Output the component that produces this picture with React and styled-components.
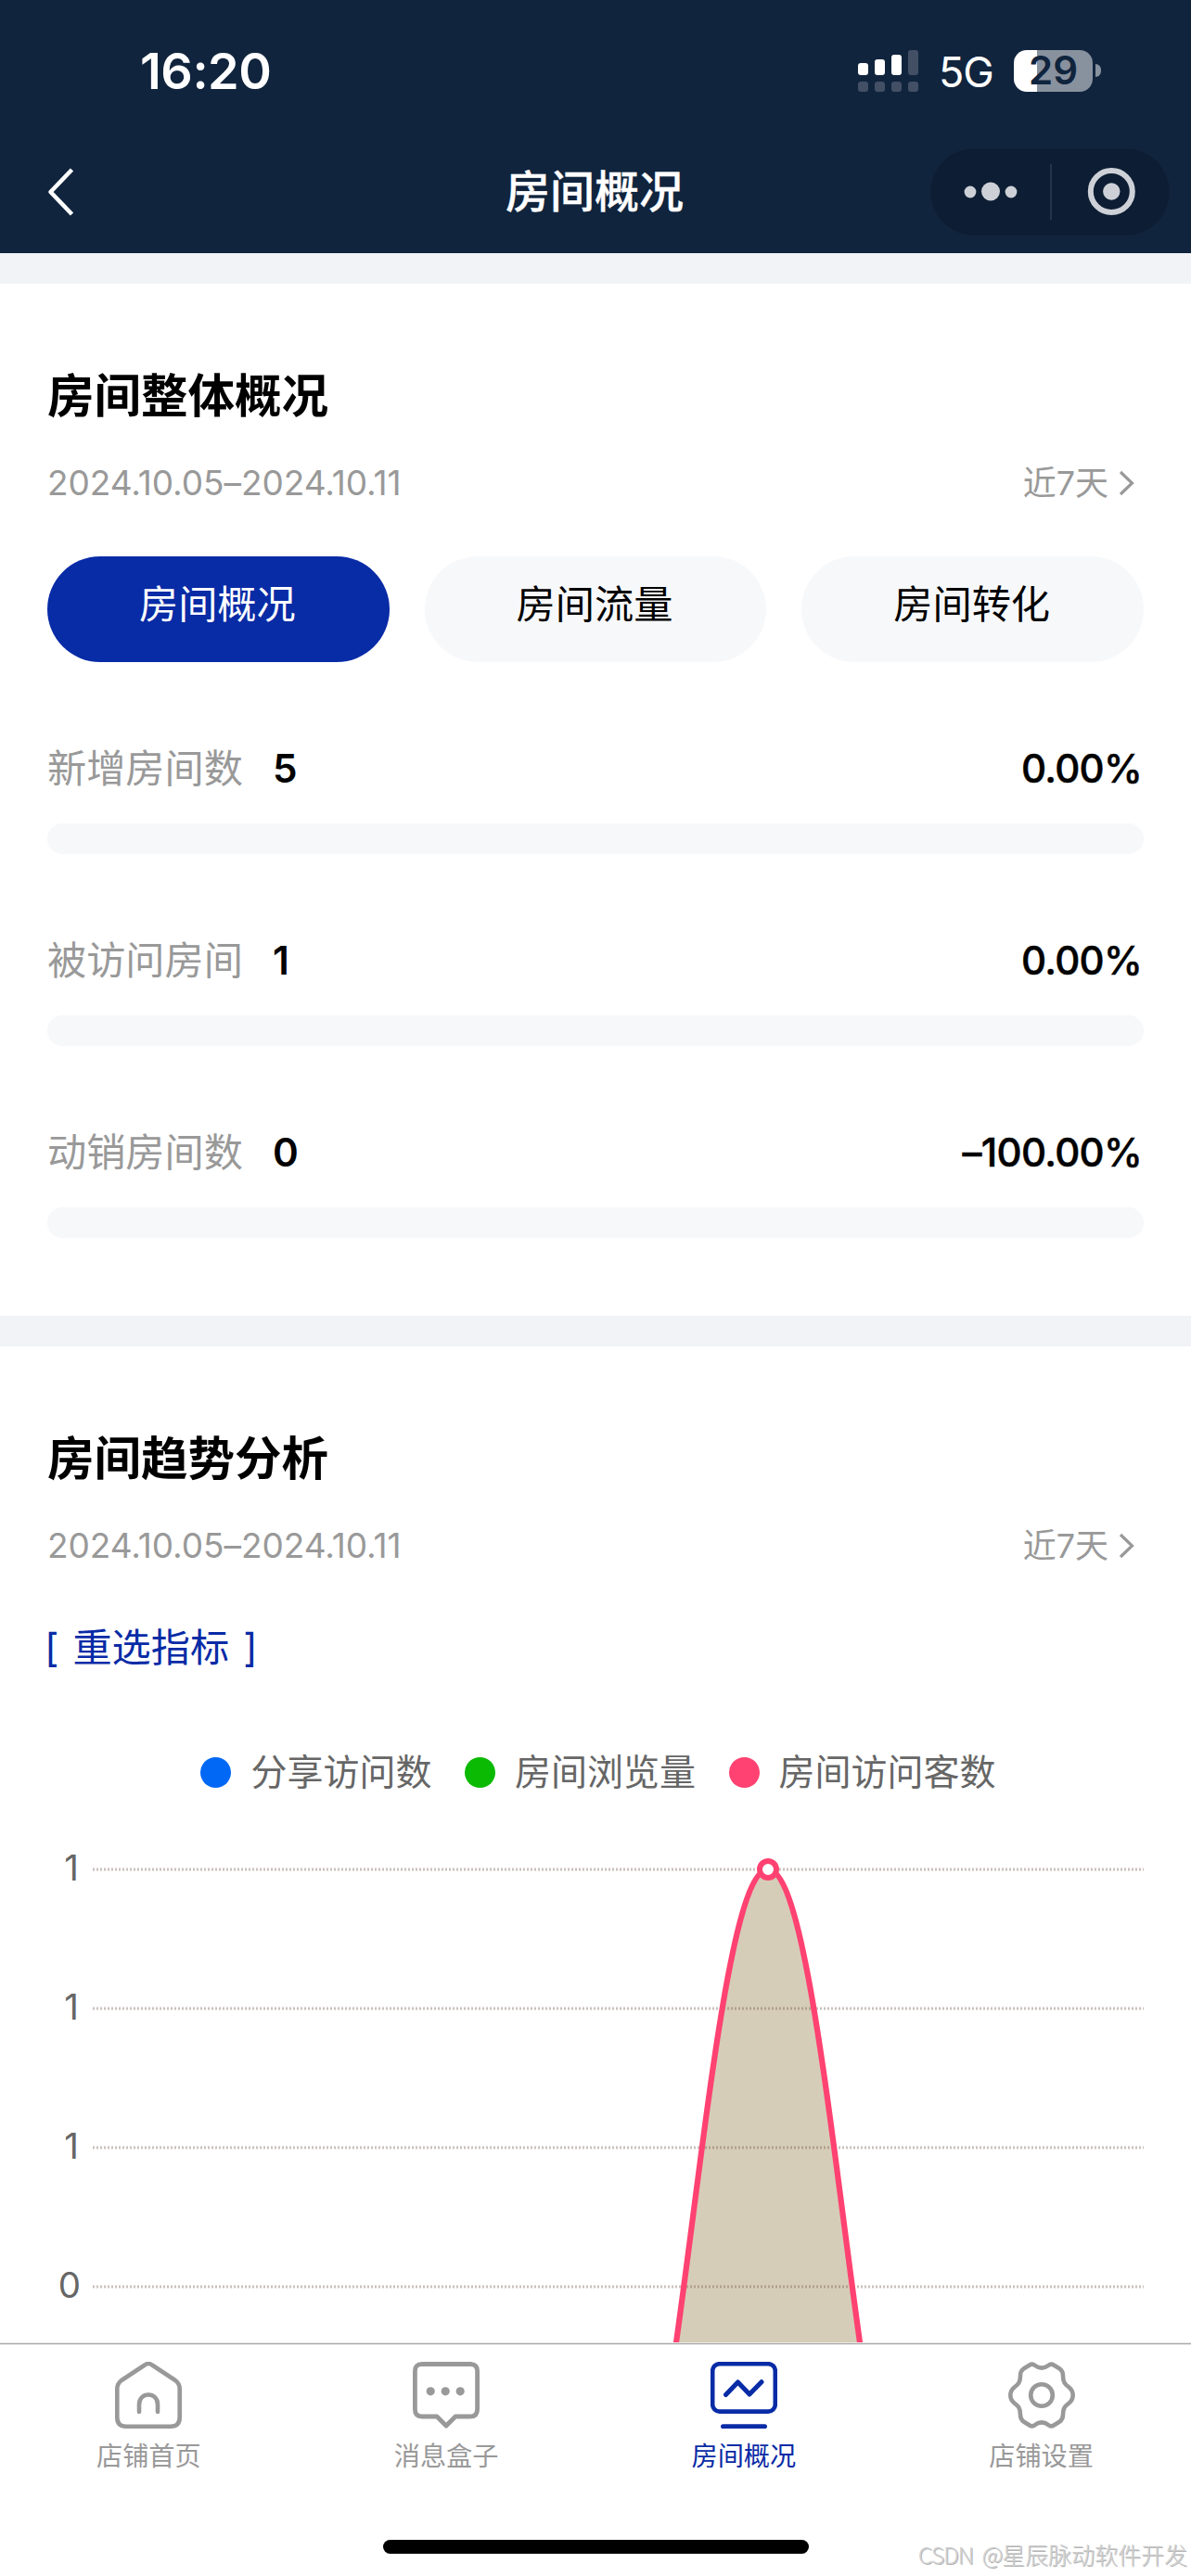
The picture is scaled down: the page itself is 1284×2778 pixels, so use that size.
import styled, { createGlobalStyle } from "styled-components";
import React from 'react';

const GlobalStyle = createGlobalStyle`
  * {
    box-sizing: border-box;
  }
  body {
    margin: 0;
    background: #fff;
    font-family: Inter, 'Noto Sans CJK SC', sans-serif;
  }
`;

const Page = styled.div`
  position: relative;
  display: flex;
  flex-direction: column;
  width: 1284px;
  height: 2778px;
  overflow: hidden;
  background: #f1f3f7;
`;

const Header = styled.header`
  flex: none;
  height: 273px;
  background: #10243d;
  color: #fff;
`;

const StatusBar = styled.div`
  display: flex;
  align-items: center;
  justify-content: space-between;
  height: 152px;
  padding: 0 97px 0 151px;
`;

const Clock = styled.div`
  padding-top: 2px;
  font-size: 54px;
  font-weight: 600;
  line-height: 64px;
  letter-spacing: -0.5px;
`;

const StatusIcons = styled.div`
  display: flex;
  align-items: center;
`;

const Network = styled.span`
  width: 103px;
  padding: 4px 0 0 22px;
  font-size: 45px;
  line-height: 48px;
  letter-spacing: -1px;
`;

const Battery = styled.div`
  width: 85px;
  height: 45px;
  border-radius: 14px;
  background: linear-gradient(to right, #fff ${props => props.$level}%, #88919e ${props => props.$level}%);
  color: #10243d;
  font-size: 42px;
  font-weight: 600;
  line-height: 44px;
  text-align: center;
`;

const BatteryTip = styled.div`
  width: 6px;
  height: 14px;
  margin-left: 3px;
  border-radius: 0 6px 6px 0;
  background: #88919e;
`;

const NavBar = styled.div`
  display: grid;
  grid-template-columns: 300px 1fr 300px;
  align-items: center;
  height: 110px;
  padding: 0 22px;
`;

const BackIcon = styled.svg`
  margin-left: 28px;
`;

const NavTitle = styled.h1`
  margin: 0;
  padding-right: 2px;
  font-size: 48px;
  font-weight: 500;
  line-height: 60px;
  text-align: center;
  -webkit-text-stroke: 0.4px #fff;
`;

const Capsule = styled.div`
  display: flex;
  align-items: center;
  justify-self: end;
  width: 260px;
  height: 96px;
  border: 1px solid #15263e;
  border-radius: 48px;
  background: #0d1d33;
`;

const Content = styled.main`
  display: flex;
  flex: 1;
  flex-direction: column;
  gap: 33px;
  padding-top: 33px;
  overflow: hidden;
`;

const Section = styled.section`
  flex: none;
  padding: 91px 51px ${props => props.$bottom || 0}px;
  background: #fff;
`;

const SectionTitle = styled.h2`
  margin: 0;
  font-size: 50.5px;
  font-weight: 600;
  line-height: 60px;
  color: #000;
`;

const DateRow = styled.div`
  display: flex;
  align-items: center;
  justify-content: space-between;
  margin-top: 39px;
  padding-right: 9px;
  font-size: 37px;
  line-height: 50px;
  color: #999;
`;

const DateRange = styled.span`
  letter-spacing: -0.05px;
`;

const RangePicker = styled.span`
  display: flex;
  align-items: center;
  gap: 11px;
  font-size: 36px;
`;

const Tabs = styled.div`
  display: grid;
  grid-template-columns: repeat(3, 1fr);
  gap: 38px;
  margin-top: 54px;
`;

const Tab = styled.button`
  height: 114px;
  padding: 0 2px 18px 0;
  border: 0;
  border-radius: 57px;
  background: ${props => (props.$active ? '#082ba6' : '#f7f8fa')};
  color: ${props => (props.$active ? '#fff' : '#000')};
  font-family: inherit;
  font-size: 42.2px;
`;

const StatHead = styled.div`
  display: flex;
  justify-content: space-between;
  margin-top: 90px;
  padding-right: 2px;
  font-size: 42.2px;
  line-height: 50px;
  color: #999;
`;

const StatValue = styled.b`
  margin-left: ${props => props.$gap || 0}px;
  font-weight: 600;
  color: #000;
`;

const StatRate = styled(StatValue)`
  font-size: 42px;
  font-weight: 500;
  letter-spacing: -0.7px;
  -webkit-text-stroke: 0.5px #000;
`;

const StatTrack = styled.div`
  height: 33px;
  margin-top: 34px;
  border-radius: 16px;
  background: #f7f8fa;
`;

const PickMetrics = styled.div`
  display: flex;
  align-items: center;
  gap: 15px;
  margin: 60px 0 0 -3px;
  font-size: 42.2px;
  line-height: 50px;
  color: #082ba6;
`;

const Bracket = styled.span`
  font-weight: 400;
`;

const Legend = styled.div`
  display: flex;
  justify-content: center;
  gap: 35.5px;
  margin-top: 84px;
  padding-left: 6px;
  font-size: 39px;
  line-height: 50px;
  color: #666;
`;

const LegendItem = styled.div`
  display: flex;
  align-items: center;
  gap: 21px;
  &::before {
    content: '';
    width: 33px;
    height: 33px;
    border-radius: 50%;
    background: ${props => props.$color};
  }
`;

const ChartSvg = styled.svg`
  display: block;
  margin: 0 -51px;
  font-size: 38.5px;
`;

const TabBar = styled.nav`
  position: relative;
  display: grid;
  flex: none;
  grid-template-columns: repeat(4, 1fr);
  height: 251px;
  padding: 19px 1px 0 0;
  border-top: 1px solid #aaa;
  background: #fff;
  box-shadow: 0 -1px 0 #e8e8e8, inset 0 1px 0 #e8e8e8;
`;

const TabBarItem = styled.div`
  display: flex;
  flex-direction: column;
  align-items: center;
  gap: 13px;
  font-size: 28.2px;
  line-height: 34px;
  color: ${props => (props.$active ? '#082ba6' : '#999')};
`;

const HomeIndicator = styled.div`
  position: absolute;
  bottom: 24px;
  left: 413px;
  width: 459px;
  height: 15px;
  border-radius: 8px;
  background: #000;
`;

const Watermark = styled.div`
  position: absolute;
  right: 4px;
  bottom: 6px;
  font-family: 'Noto Sans CJK SC', sans-serif;
  font-size: 25px;
  font-weight: 300;
  line-height: 36px;
  color: #d0d0d0;
  text-shadow: 1px 1px 0 #b4b4b4;
  white-space: nowrap;
`;

const WatermarkSite = styled.span`
  letter-spacing: -1.2px;
  word-spacing: 5px;
`;

const stats = [
  { label: '新增房间数', value: '5', rate: '0.00%' },
  { label: '被访问房间', value: '1', rate: '0.00%' },
  { label: '动销房间数', value: '0', rate: '–100.00%' },
];

const series = [
  { name: '分享访问数', color: '#0068f5' },
  { name: '房间浏览量', color: '#0bba02' },
  { name: '房间访问客数', color: '#ff4271' },
];

const gridLines = [
  { label: '1', x: 85, y: 80 },
  { label: '1', x: 85, y: 230 },
  { label: '1', x: 85, y: 380 },
  { label: '0', x: 87, y: 530 },
];

const curve = 'M666 830C730.8 830 763.2 80 828 80S925.2 830 990 830';

const tabBarItems = [
  {
    label: '店铺首页',
    icon: (
      <>
        <path d="M32 3.5Q36 .5 40 3.5L65 20Q69.7 23.5 69.7 29V60Q69.7 69.7 60 69.7H12Q2.3 69.7 2.3 60V29Q2.3 23.5 7 20Z" />
        <path d="M26 54V46C26 32 46 32 46 46V54" />
      </>
    ),
  },
  {
    label: '消息盒子',
    icon: (
      <>
        <path strokeWidth="4.8" d="M10 2.5H62Q69.6 2.5 69.6 10V51Q69.6 59 62 59H46L36 69L26 59H10Q2.4 59 2.4 51V10Q2.4 2.5 10 2.5Z" />
        <g fill="currentColor" stroke="none">
          <circle cx="19.2" cy="31.8" r="4.6" />
          <circle cx="35.2" cy="31.8" r="4.6" />
          <circle cx="51.2" cy="31.8" r="4.6" />
        </g>
      </>
    ),
  },
  {
    label: '房间概况',
    active: true,
    icon: (
      <>
        <rect x="2.2" y="2.2" width="67.6" height="51.4" rx="7.5" />
        <path strokeWidth="5" d="M16.5 35.5L29.5 22L42 35L55 21.7M13.5 69.7H58.5" />
      </>
    ),
  },
  {
    label: '店铺设置',
    icon: (
      <>
        <path d="M23 3.5Q26 1.5 28.5 3.7Q36 9.5 43.5 3.7Q46 1.5 49 3.5L55.5 7.5Q59 10 59 15C59 22 61 24 65.5 27.5Q69.7 31 69.7 36T65.5 44.5C61 48 59 50 59 57Q59 62 55.5 64.5L49 68.5Q46 70.5 43.5 68.3Q36 62.5 28.5 68.3Q26 70.5 23 68.5L16.5 64.5Q13 62 13 57C13 50 11 48 6.5 44.5Q2.3 41 2.3 36T6.5 27.5C11 24 13 22 13 15Q13 10 16.5 7.5Z" />
        <circle cx="36" cy="36" r="11.8" />
      </>
    ),
  },
];

function Signal() {
  return (
    <svg width="65" height="45" fill="#fff">
      <rect x="0" y="14" width="11" height="13" rx="3" />
      <rect x="18" y="10" width="11" height="17" rx="3" />
      <rect x="36" y="5" width="11" height="22" rx="3" />
      <g fill="#434f65">
        <rect x="54" y="0" width="11" height="27" rx="3" />
        {[0, 18, 36, 54].map(x => (
          <rect key={x} x={x} y="34" width="11" height="11" rx="3" />
        ))}
      </g>
    </svg>
  );
}

function DateLine() {
  return (
    <DateRow>
      <DateRange>2024.10.05–2024.10.11</DateRange>
      <RangePicker>
        近7天
        <svg width="18" height="28" fill="none" stroke="#999" strokeWidth="3.2">
          <path d="M2 2L14.5 14L2 26" />
        </svg>
      </RangePicker>
    </DateRow>
  );
}

function TrendChart() {
  return (
    <ChartSvg width="1284" height="600">
      <path d={curve} fill="#d6cdb8" />
      {gridLines.map(({ label, x, y }) => (
        <g key={y}>
          <text x={x} y={y + 12} textAnchor="end" fill="#666">{label}</text>
          <path d={`M100 ${y}H1233`} stroke="rgba(110, 80, 70, 0.36)" strokeWidth="3" strokeDasharray="2 2" />
        </g>
      ))}
      <path d={curve} fill="none" stroke="#ff4271" strokeWidth="6.2" />
      <circle cx="828" cy="80" r="9" fill="#fff" stroke="#ff4271" strokeWidth="6" />
    </ChartSvg>
  );
}

export default function App() {
  return (
    <>
      <GlobalStyle />
      <Page>
        <Header>
          <StatusBar>
            <Clock>16:20</Clock>
            <StatusIcons>
              <Signal />
              <Network>5G</Network>
              <Battery $level={29}>29</Battery>
              <BatteryTip />
            </StatusIcons>
          </StatusBar>
          <NavBar>
            <BackIcon width="34" height="56" fill="none" stroke="#fff" strokeWidth="4.6" strokeLinejoin="round">
              <path d="M27.5 4L4.5 28L27.5 52" />
            </BackIcon>
            <NavTitle>房间概况</NavTitle>
            <Capsule>
              <svg width="258" height="94" fill="#cdd1d7">
                <circle cx="43" cy="47" r="6.4" />
                <circle cx="65" cy="46.5" r="10" />
                <circle cx="87" cy="47" r="6.4" />
                <rect x="129" y="17" width="2" height="60" fill="#24344b" />
                <circle cx="195.3" cy="46.5" r="22.5" fill="none" stroke="#cdd1d7" strokeWidth="6" />
                <circle cx="195.3" cy="46.5" r="9.2" />
              </svg>
            </Capsule>
          </NavBar>
        </Header>

        <Content>
          <Section $bottom={84}>
            <SectionTitle>房间整体概况</SectionTitle>
            <DateLine />
            <Tabs>
              <Tab $active>房间概况</Tab>
              <Tab>房间流量</Tab>
              <Tab>房间转化</Tab>
            </Tabs>
            {stats.map(({ label, value, rate }) => (
              <div key={label}>
                <StatHead>
                  <span>
                    {label}
                    <StatValue $gap={32}>{value}</StatValue>
                  </span>
                  <StatRate>{rate}</StatRate>
                </StatHead>
                <StatTrack />
              </div>
            ))}
          </Section>

          <Section>
            <SectionTitle>房间趋势分析</SectionTitle>
            <DateLine />
            <PickMetrics>
              <Bracket>[</Bracket>
              重选指标
              <Bracket>]</Bracket>
            </PickMetrics>
            <Legend>
              {series.map(({ name, color }) => (
                <LegendItem key={name} $color={color}>{name}</LegendItem>
              ))}
            </Legend>
            <TrendChart />
          </Section>
        </Content>

        <TabBar>
          {tabBarItems.map(({ label, icon, active }) => (
            <TabBarItem key={label} $active={active}>
              <svg width="72" height="72" fill="none" stroke="currentColor" strokeWidth="4.6" strokeLinecap="round" strokeLinejoin="round">
                {icon}
              </svg>
              {label}
            </TabBarItem>
          ))}
          <HomeIndicator />
        </TabBar>
        <Watermark>
          <WatermarkSite>CSDN @</WatermarkSite>星辰脉动软件开发
        </Watermark>
      </Page>
    </>
  );
}
